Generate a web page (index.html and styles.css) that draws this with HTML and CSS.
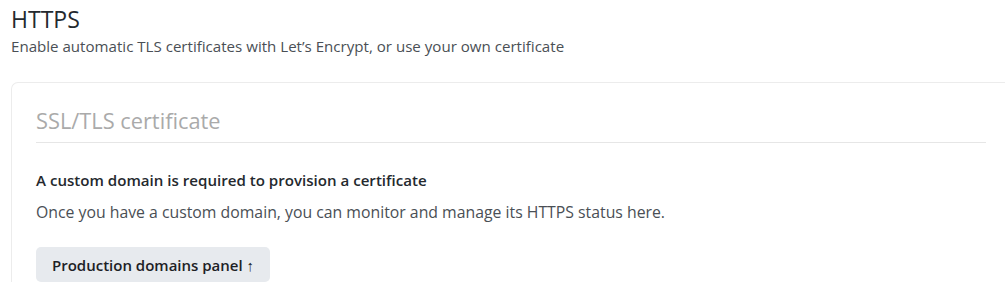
FILE: index.html
```html
<!DOCTYPE html>
<html lang="en">
<head>
  <meta charset="UTF-8" />
  <title>HTTPS</title>
  <link rel="stylesheet" href="styles.css">
</head>
<body>
  <div class="section">
    <h2 class="section-title">HTTPS</h2>
    <p class="section-desc">Enable automatic TLS certificates with Let’s Encrypt, or use your own certificate</p>

    <div class="card">
      <h3 class="card-title">SSL/TLS certificate</h3>
      <div class="card-body">
        <p class="notice-title">A custom domain is required to provision a certificate</p>
        <p class="notice-text">Once you have a custom domain, you can monitor and manage its HTTPS status here.</p>
        <button class="btn">Production domains panel <span class="arrow">↑</span></button>
      </div>
    </div>
  </div>
</body>
</html>
```

FILE: styles.css
```css
body {
  font-family: "Open Sans", "Noto Sans", Arial, sans-serif;
  background: #fff;
  color: #333;
  margin: 0;
  padding: 0 0 0 11px;
}
.section-title {
  font-size: 23px;
  font-weight: 500;
  color: #24292e;
  margin: 4px 0 0;
  line-height: 30px;
}
.section-desc {
  font-size: 15.1px;
  color: #4a4f55;
  margin: 1px 0 0;
  line-height: 22px;
}
.card {
  margin-top: 25px;
  border: 1px solid #ececec;
  border-right: none;
  border-bottom: none;
  border-radius: 7px 0 0 0;
  padding: 22px 19px 0 24px;
}
.card-title {
  font-size: 21.8px;
  font-weight: 400;
  color: #aaaaaa;
  margin: 0;
  padding-bottom: 5px;
  line-height: 32px;
  border-bottom: 1px solid #e6e6e6;
}
.card-body {
  padding-top: 25px;
}
.notice-title {
  font-size: 15.1px;
  font-weight: 600;
  color: #24292e;
  margin: 0;
  line-height: 24px;
}
.notice-text {
  font-size: 15.8px;
  color: #4a4f55;
  margin: 8px 0 0;
  line-height: 24px;
}
.btn {
  margin-top: 23px;
  font-family: inherit;
  font-size: 15px;
  font-weight: 600;
  color: #1d2125;
  background: #e7eaee;
  border: none;
  border-radius: 5px;
  padding: 0 16px;
  height: 35px;
}
.arrow {
  font-weight: 400;
}
```
